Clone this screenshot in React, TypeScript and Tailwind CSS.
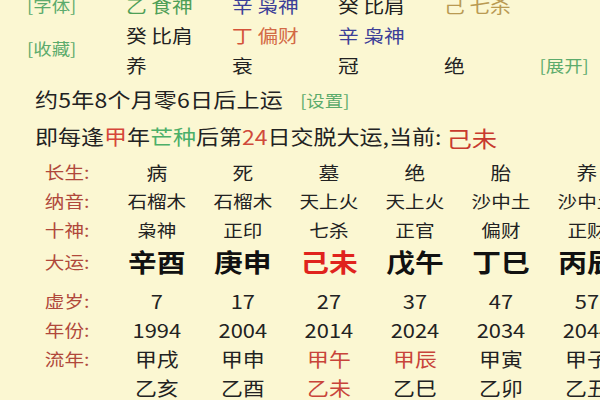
import React from "react";

type Col = {
  cs: string;
  ny: string;
  ss: string;
  dy: string;
  dyRed?: boolean;
  age: string;
  yr: string;
  ln1: string;
  ln1Red?: boolean;
  ln2: string;
  ln2Red?: boolean;
};

const cols: Col[] = [
  { cs: "病", ny: "石榴木", ss: "枭神", dy: "辛酉", age: "7", yr: "1994", ln1: "甲戌", ln2: "乙亥" },
  { cs: "死", ny: "石榴木", ss: "正印", dy: "庚申", age: "17", yr: "2004", ln1: "甲申", ln2: "乙酉" },
  { cs: "墓", ny: "天上火", ss: "七杀", dy: "己未", dyRed: true, age: "27", yr: "2014", ln1: "甲午", ln1Red: true, ln2: "乙未", ln2Red: true },
  { cs: "绝", ny: "天上火", ss: "正官", dy: "戊午", age: "37", yr: "2024", ln1: "甲辰", ln1Red: true, ln2: "乙巳" },
  { cs: "胎", ny: "沙中土", ss: "偏财", dy: "丁巳", age: "47", yr: "2034", ln1: "甲寅", ln2: "乙卯" },
  { cs: "养", ny: "沙中土", ss: "正财", dy: "丙辰", age: "57", yr: "2044", ln1: "甲子", ln2: "乙丑" },
];

function Label({ text }: { text: string }) {
  return (
    <div className="w-[99px] shrink-0 pl-[39px] text-[17px] text-[#b0483b] whitespace-nowrap">
      {text}
    </div>
  );
}

function Cell({ children, className = "" }: { children: React.ReactNode; className?: string }) {
  return (
    <div className={"w-[74.8px] shrink-0 text-center whitespace-nowrap " + className}>{children}</div>
  );
}

export default function App() {
  const font = { fontFamily: '"Noto Sans CJK SC", "Noto Sans", sans-serif' };
  return (
    <div className="w-[600px] h-[400px] overflow-hidden bg-[#fbf7d2] text-[#222222]" style={font}>
      <div className="w-[522px] origin-top-left scale-x-[1.15]">
        {/* top pillars section */}
        <div className="-mt-[10px] grid grid-cols-[109.6px_92.2px_92.2px_92.2px_83px_auto] grid-rows-[30px_30px_30px] items-center text-[18px] leading-none whitespace-nowrap">
          <div className="pl-[23.5px] text-[16px] text-[#5cab6c]">[字体]</div>
          <div className="text-[#4f9f57]">乙 食神</div>
          <div className="text-[#3d3f98]">辛 枭神</div>
          <div>癸 比肩</div>
          <div className="text-[#b99a52]">己 七杀</div>
          <div></div>

          <div className="row-span-2 self-center pl-[23.5px] pb-[4px] text-[16px] text-[#5cab6c]">[收藏]</div>
          <div>癸 比肩</div>
          <div>
            <span className="text-[#d4533a]">丁</span>
            <span className="text-[#d36a45]"> 偏财</span>
          </div>
          <div className="text-[#3d3f98]">辛 枭神</div>
          <div></div>
          <div></div>

          <div>养</div>
          <div>衰</div>
          <div>冠</div>
          <div>绝</div>
          <div className="text-[16px] text-[#5cab6c]">[展开]</div>
        </div>

        {/* info lines */}
        <div className="mt-[4px] flex h-[32px] items-center pl-[30.4px] whitespace-nowrap">
          <span className="w-[230.6px] text-[20px] tracking-[0.2px]">约5年8个月零6日后上运</span>
          <span className="text-[16px] text-[#5cab6c]">[设置]</span>
        </div>
        <div className="mt-[5px] flex h-[32px] items-center pl-[30.4px] whitespace-nowrap text-[20px]">
          <span>即每逢</span>
          <span className="text-[#d6463a]">甲</span>
          <span>年</span>
          <span className="text-[#4caf68]">芒种</span>
          <span>后第</span>
          <span className="text-[#d04a3a]">24</span>
          <span>日交脱大运,当前:&nbsp;</span>
          <span className="text-[22px] text-[#c83a2e]">己未</span>
        </div>

        {/* luck table */}
        <div className="mt-[4px] flex flex-col leading-none">
          <div className="flex h-[29px] items-center">
            <Label text="长生:" />
            {cols.map((c, i) => (
              <Cell key={i} className="text-[18px]">{c.cs}</Cell>
            ))}
          </div>
          <div className="flex h-[29px] items-center">
            <Label text="纳音:" />
            {cols.map((c, i) => (
              <Cell key={i} className="text-[17px]">{c.ny}</Cell>
            ))}
          </div>
          <div className="flex h-[29px] items-center">
            <Label text="十神:" />
            {cols.map((c, i) => (
              <Cell key={i} className="text-[17px]">{c.ss}</Cell>
            ))}
          </div>
          <div className="mb-[7px] flex h-[34px] items-center">
            <Label text="大运:" />
            {cols.map((c, i) => (
              <Cell
                key={i}
                className={"text-[25px] font-bold " + (c.dyRed ? "text-[#e0231d]" : "text-[#111111]")}
              >
                {c.dy}
              </Cell>
            ))}
          </div>
          <div className="flex h-[30px] items-center">
            <Label text="虚岁:" />
            {cols.map((c, i) => (
              <Cell key={i} className="text-[19px]">{c.age}</Cell>
            ))}
          </div>
          <div className="flex h-[29px] items-center">
            <Label text="年份:" />
            {cols.map((c, i) => (
              <Cell key={i} className="text-[19px]">{c.yr}</Cell>
            ))}
          </div>
          <div className="flex h-[29px] items-center">
            <Label text="流年:" />
            {cols.map((c, i) => (
              <Cell key={i} className={"text-[19px] " + (c.ln1Red ? "text-[#c8443a]" : "")}>
                {c.ln1}
              </Cell>
            ))}
          </div>
          <div className="flex h-[29px] items-center">
            <div className="w-[99px] shrink-0" />
            {cols.map((c, i) => (
              <Cell key={i} className={"text-[19px] " + (c.ln2Red ? "text-[#c8443a]" : "")}>
                {c.ln2}
              </Cell>
            ))}
          </div>
        </div>
      </div>
    </div>
  );
}
